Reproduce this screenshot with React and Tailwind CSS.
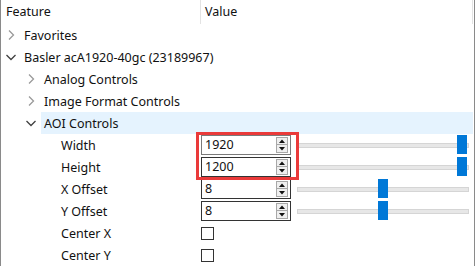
import React from "react";

const font = { fontFamily: '"Noto Sans", "Open Sans", sans-serif' };

function Chevron({ open, color, left }) {
  return (
    <svg
      width="12"
      height="12"
      viewBox="0 0 12 12"
      className="shrink-0"
      style={{ marginLeft: left }}
    >
      {open ? (
        <path d="M1.5 4 L6 8.5 L10.5 4" fill="none" stroke={color} strokeWidth="1.3" />
      ) : (
        <path d="M4 1.5 L8.5 6 L4 10.5" fill="none" stroke={color} strokeWidth="1.3" />
      )}
    </svg>
  );
}

function Spin() {
  return (
    <div className="flex flex-col mr-[2px] shrink-0">
      <div className="w-[12px] h-[8px] border border-[#a8a8a8] bg-[#efefef] flex items-center justify-center">
        <svg width="6" height="4" viewBox="0 0 6 4"><path d="M0 4 L3 0.5 L6 4 Z" fill="#111" /></svg>
      </div>
      <div className="w-[12px] h-[8px] border border-t-0 border-[#a8a8a8] bg-[#efefef] flex items-center justify-center">
        <svg width="6" height="4" viewBox="0 0 6 4"><path d="M0 0 L3 3.5 L6 0 Z" fill="#111" /></svg>
      </div>
    </div>
  );
}

function NumberRow({ value, thumb, gray }) {
  return (
    <div className="flex items-center h-full">
      <div
        className={`ml-[1px] w-[90px] h-[20px] border ${gray ? "border-[#7a7a7a]" : "border-[#333333]"} bg-white flex items-center`}
      >
        <span className="flex-1 pl-[3px] pt-[1px] text-[12.5px] text-[#111]">{value}</span>
        <Spin />
      </div>
      <div className="ml-[6px] w-[172px] relative h-[20px] flex items-center">
        <div className="w-full h-[5px] bg-[#e7e7e7] border border-[#d5d5d5]" />
        <div className="absolute top-0 w-[10px] h-[19px] bg-[#0078d7]" style={{ left: thumb }} />
      </div>
    </div>
  );
}

function Check() {
  return (
    <div className="flex items-center h-full">
      <div className="ml-[1px] w-[13px] h-[13px] border border-[#333333] bg-white" />
    </div>
  );
}

const rows = [
  { label: "Favorites", spacer: 22, pad: 2, chev: { open: false, color: "#9a9a9a", left: 4 } },
  { label: "Basler acA1920-40gc (23189967)", spacer: 22, pad: 2, chev: { open: true, color: "#404040", left: 4 } },
  { label: "Analog Controls", spacer: 41, pad: 3, chev: { open: false, color: "#9a9a9a", left: 24 } },
  { label: "Image Format Controls", spacer: 41, pad: 3, chev: { open: false, color: "#9a9a9a", left: 24 } },
  { label: "AOI Controls", spacer: 41, pad: 3, chev: { open: true, color: "#404040", left: 24 }, sel: true },
  { label: "Width", spacer: 41, pad: 20, val: <NumberRow value="1920" thumb={160} gray /> },
  { label: "Height", spacer: 41, pad: 20, val: <NumberRow value="1200" thumb={160} /> },
  { label: "X Offset", spacer: 41, pad: 20, val: <NumberRow value="8" thumb={81} /> },
  { label: "Y Offset", spacer: 41, pad: 20, val: <NumberRow value="8" thumb={81} /> },
  { label: "Center X", spacer: 41, pad: 20, val: <Check /> },
  { label: "Center Y", spacer: 41, pad: 20, val: <Check /> },
];

export default function App() {
  return (
    <div
      className="relative w-[475px] h-[266px] overflow-hidden bg-white border-l border-r border-[#8a8a8a] text-[12.5px] text-[#111]"
      style={font}
    >
      <div className="w-[472px] h-[24px] flex border-r border-[#e3e3e3]">
        <div className="w-[200px] pl-[5px] flex items-center border-r border-[#e3e3e3]">Feature</div>
        <div className="flex-1 pl-[4px] flex items-center">Value</div>
      </div>
      <div className="w-[472px] flex flex-col">
        {rows.map((r) => (
          <div key={r.label} className="flex h-[22px]">
            <div className="shrink-0 flex items-center" style={{ width: r.spacer - 1 }}>
              {r.chev && <Chevron {...r.chev} />}
            </div>
            <div className={`flex-1 flex ${r.sel ? "bg-[#e5f3fe]" : ""}`}>
              <div
                className="shrink-0 flex items-center whitespace-nowrap pt-[2px]"
                style={{ width: 200 - r.spacer, paddingLeft: r.pad }}
              >
                {r.label}
              </div>
              <div className="flex-1">{r.val}</div>
            </div>
          </div>
        ))}
      </div>
      <div className="absolute left-[195px] top-[132px] w-[103px] h-[48px] border-[3px] border-[#ea3a3a]" />
    </div>
  );
}
